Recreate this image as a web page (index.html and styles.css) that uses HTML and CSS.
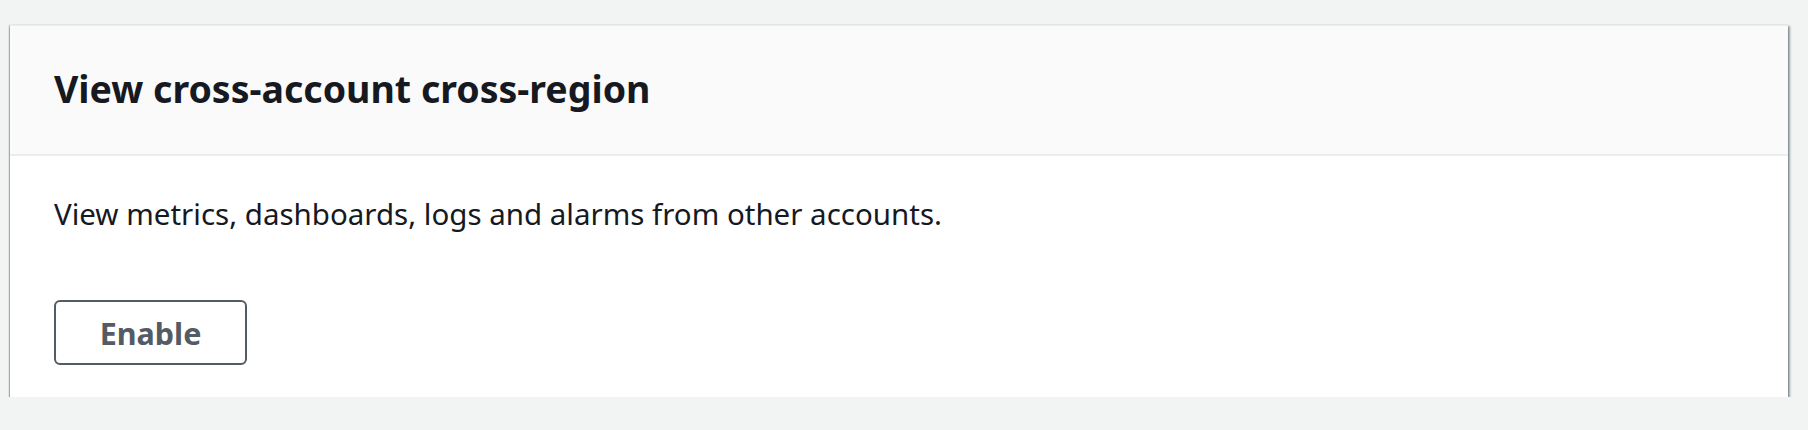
FILE: index.html
```html
<!DOCTYPE html>
<html lang="en">
<head>
  <meta charset="UTF-8">
  <title>View cross-account cross-region</title>
  <link rel="stylesheet" href="styles.css">
</head>
<body>
  <div class="painel">
    <div class="painel-topo">
      <h2>View cross-account cross-region</h2>
    </div>
    <div class="painel-corpo">
      <p>View metrics, dashboards, logs and alarms from other accounts.</p>
      <button class="botao">Enable</button>
    </div>
  </div>
</body>
</html>
```

FILE: styles.css
```css
body {
  margin: 0;
  padding: 25px 20px 0 10px;
  background-color: #f2f3f3;
  font-family: 'Noto Sans', 'Open Sans', sans-serif;
  color: #16191f;
}
.painel {
  background-color: #ffffff;
  border-top: 1px solid #eaeded;
  box-shadow: 0 2px 2px 0 rgba(0, 28, 36, 0.5), 2px 1px 2px 0 rgba(0, 28, 36, 0.35), -1px 0 1px 0 rgba(0, 28, 36, 0.2);
}
.painel-topo {
  background-color: #fafafa;
  border-bottom: 2px solid #eaeded;
  padding: 41px 44px 43px;
}
.painel-topo h2 {
  margin: 0;
  font-size: 37.5px;
  line-height: 44px;
  font-weight: bold;
}
.painel-corpo {
  padding: 38px 44px 32px;
}
.painel-corpo p {
  margin: 0 0 66px;
  font-size: 29.5px;
  line-height: 40px;
}
.botao {
  display: block;
  width: 193px;
  height: 65px;
  background: #ffffff;
  border: 2px solid #545b64;
  border-radius: 6px;
  color: #545b64;
  font-family: 'Noto Sans', 'Open Sans', sans-serif;
  font-size: 30.5px;
  font-weight: bold;
  padding: 0;
}
```
